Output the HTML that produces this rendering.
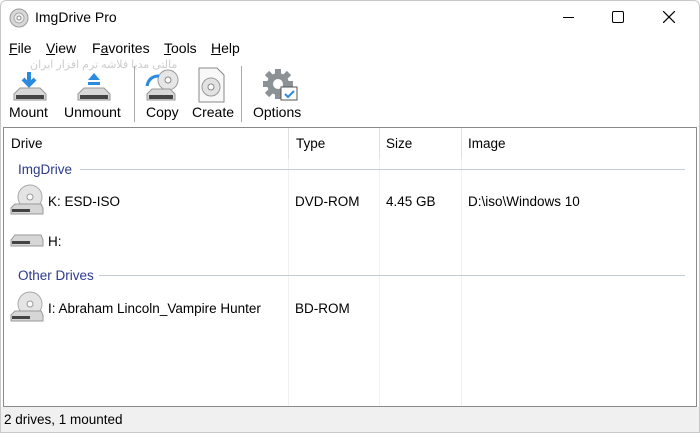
<!DOCTYPE html>
<html><head><meta charset="utf-8"><style>
*{margin:0;padding:0;box-sizing:border-box}
body{width:700px;height:433px;overflow:hidden;background:#fff;font-family:"Liberation Sans","DejaVu Sans",sans-serif;font-size:13.5px;color:#000;position:relative}
.a{position:absolute;white-space:nowrap}
.m{position:absolute;top:40px;font-size:14px}
.lbl{position:absolute;font-size:14px;top:104px}
.grp{color:#2b3a8c}
</style></head><body>
<div style="position:absolute;inset:0;border:1px solid #c8c8c8;border-radius:6px 6px 0 0"></div>
<svg class="a" style="left:9px;top:8px" width="20" height="20" viewBox="0 0 20 20"><circle cx="10" cy="10" r="9" fill="#d8d8d8" stroke="#999"/><circle cx="10" cy="10" r="5" fill="#eee" stroke="#aaa"/><circle cx="10" cy="10" r="2" fill="#fff" stroke="#888"/></svg>
<div class="a" style="left:35px;top:9px;font-size:14px">ImgDrive Pro</div>
<div class="a" style="left:563px;top:17px;width:11px;height:1px;background:#000"></div>
<div class="a" style="left:612px;top:11px;width:12px;height:12px;border:1px solid #000;border-radius:2px"></div>
<svg class="a" style="left:663px;top:11px" width="12" height="12"><path d="M0 0L12 12M12 0L0 12" stroke="#000" stroke-width="1.2"/></svg>
<div class="m" style="left:9px"><u>F</u>ile</div>
<div class="m" style="left:46px"><u>V</u>iew</div>
<div class="m" style="left:92px">F<u>a</u>vorites</div>
<div class="m" style="left:164px"><u>T</u>ools</div>
<div class="m" style="left:211px"><u>H</u>elp</div>
<div class="a" style="left:30px;top:58px;font-size:11px;color:#ccc">مالتی مدیا فلاشه ترم افزار ایران</div>
<svg class="a" style="left:10px;top:70px" width="40" height="34"><path d="M19 2v12M13 9l6 6 6-6" stroke="#2a8ae0" stroke-width="4" fill="none"/><path d="M4 24l6-6h20l6 6v6H4z" fill="#d8d8d8" stroke="#999"/><rect x="6" y="25" width="28" height="4" fill="#444"/></svg>
<svg class="a" style="left:74px;top:70px" width="40" height="34"><path d="M14 10l6-7 6 7z" fill="#2a8ae0"/><rect x="14" y="12" width="12" height="3" fill="#2a8ae0"/><path d="M4 24l6-6h20l6 6v6H4z" fill="#d8d8d8" stroke="#999"/><rect x="6" y="25" width="28" height="4" fill="#444"/></svg>
<div class="a" style="left:134px;top:66px;width:1px;height:56px;background:#aaa"></div>
<svg class="a" style="left:144px;top:68px" width="36" height="36"><circle cx="24" cy="12" r="10" fill="#e6e6e6" stroke="#999"/><circle cx="24" cy="12" r="3" fill="#fff" stroke="#888"/><path d="M3 18q2-10 12-10" stroke="#2a8ae0" stroke-width="3" fill="none"/><path d="M3 26l5-5h18l5 5v6H3z" fill="#d8d8d8" stroke="#999"/><rect x="5" y="27" width="24" height="4" fill="#444"/></svg>
<svg class="a" style="left:197px;top:66px" width="30" height="38"><path d="M2 2h18l7 7v27H2z" fill="#f8f8f8" stroke="#888"/><circle cx="14" cy="21" r="9" fill="#e2e2e2" stroke="#999"/><circle cx="14" cy="21" r="3" fill="#fff" stroke="#888"/></svg>
<div class="a" style="left:241px;top:66px;width:1px;height:56px;background:#aaa"></div>
<svg class="a" style="left:261px;top:67px" width="38" height="38"><circle cx="17" cy="17" r="11" fill="#8c9196"/><g stroke="#8c9196" stroke-width="6"><path d="M17 2v30M2 17h30M6 6l22 22M28 6L6 28"/></g><circle cx="17" cy="17" r="5" fill="#fff"/><rect x="20" y="20" width="16" height="13" fill="#fff" stroke="#555"/><path d="M24 27l3 3 6-6" stroke="#2a8ae0" stroke-width="2" fill="none"/></svg>
<div class="lbl" style="left:9px">Mount</div>
<div class="lbl" style="left:64px">Unmount</div>
<div class="lbl" style="left:146px">Copy</div>
<div class="lbl" style="left:192px">Create</div>
<div class="lbl" style="left:253px">Options</div>
<div class="a" style="left:3px;top:127px;width:694px;height:280px;border:1px solid #8a8a8a;background:#fff"></div>
<div class="a" style="left:288px;top:128px;width:1px;height:278px;background:#f0f0f0"></div>
<div class="a" style="left:379px;top:128px;width:1px;height:278px;background:#f0f0f0"></div>
<div class="a" style="left:461px;top:128px;width:1px;height:278px;background:#f0f0f0"></div>
<div class="a" style="left:288px;top:128px;width:1px;height:31px;background:#e0e0e0"></div>
<div class="a" style="left:379px;top:128px;width:1px;height:31px;background:#e0e0e0"></div>
<div class="a" style="left:461px;top:128px;width:1px;height:31px;background:#e0e0e0"></div>
<div class="a" style="left:11px;top:136px">Drive</div>
<div class="a" style="left:296px;top:136px">Type</div>
<div class="a" style="left:386px;top:136px">Size</div>
<div class="a" style="left:468px;top:136px">Image</div>
<div class="a grp" style="left:18px;top:162px">ImgDrive</div>
<div class="a" style="left:80px;top:169px;width:605px;height:1px;background:#c5ccd8"></div>
<div class="a grp" style="left:18px;top:268px">Other Drives</div>
<div class="a" style="left:99px;top:275px;width:586px;height:1px;background:#c5ccd8"></div>
<svg class="a" style="left:9px;top:184px" width="36" height="32"><circle cx="21" cy="13" r="12" fill="#e4e4e4" stroke="#aaa"/><circle cx="21" cy="13" r="3" fill="#fff" stroke="#999"/><path d="M2 24l4-4h26l2 4v6H2z" fill="#d6d6d6" stroke="#999"/><rect x="3" y="25" width="18" height="3" fill="#444"/></svg>
<div class="a" style="left:48px;top:194px">K: ESD-ISO</div>
<div class="a" style="left:295px;top:194px">DVD-ROM</div>
<div class="a" style="left:386px;top:194px">4.45 GB</div>
<div class="a" style="left:468px;top:194px">D:\iso\Windows 10</div>
<svg class="a" style="left:9px;top:232px" width="36" height="16"><path d="M2 8l4-5h26l2 5v6H2z" fill="#d6d6d6" stroke="#999"/><rect x="3" y="9" width="18" height="3" fill="#444"/></svg>
<div class="a" style="left:48px;top:234px">H:</div>
<svg class="a" style="left:9px;top:291px" width="36" height="32"><circle cx="21" cy="13" r="12" fill="#e4e4e4" stroke="#aaa"/><circle cx="21" cy="13" r="3" fill="#fff" stroke="#999"/><path d="M2 24l4-4h26l2 4v6H2z" fill="#d6d6d6" stroke="#999"/><rect x="3" y="25" width="18" height="3" fill="#444"/></svg>
<div class="a" style="left:48px;top:301px">I: Abraham Lincoln_Vampire Hunter</div>
<div class="a" style="left:295px;top:301px">BD-ROM</div>
<div class="a" style="left:1px;top:407px;width:698px;height:25px;background:#f0f0f0"></div>
<div class="a" style="left:4px;top:412px">2 drives, 1 mounted</div>
</body></html>
